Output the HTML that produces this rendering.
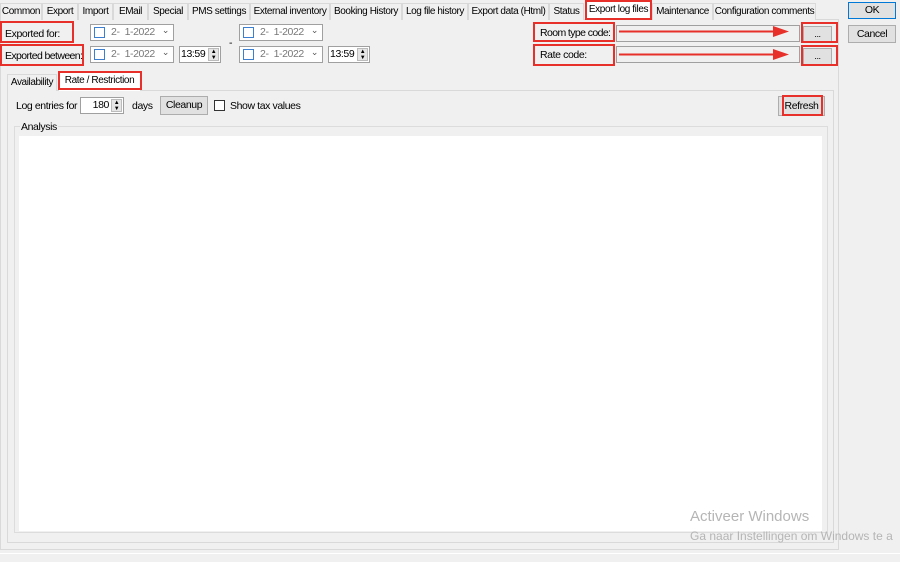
<!DOCTYPE html>
<html><head><style>
*{box-sizing:border-box;margin:0;padding:0}
body{width:900px;height:562px;background:#f0f0f0;font-family:"Liberation Sans",sans-serif;font-size:10.5px;color:#000;position:relative;overflow:hidden;letter-spacing:-0.4px;white-space:nowrap}
.a{position:absolute}
.tab{position:absolute;top:3px;height:17px;border:1px solid #d9d9d9;border-bottom:none;background:#f0f0f0;line-height:15px;text-align:center;font-size:10px;overflow:hidden}
.red{position:absolute;border:2px solid #e8302a}
.dp{position:absolute;height:17px;background:#fff;border:1px solid #a0a0a0;color:#777}
.dp .cb{position:absolute;left:3px;top:2px;width:11px;height:11px;border:1px solid #3c7fd0}
.dp .t{position:absolute;left:20px;top:1px}
.dp .v{position:absolute;right:4px;top:0px;font-size:9px;color:#555}
.tm{position:absolute;height:17px;background:#fff;border:1px solid #a0a0a0;padding-left:1px;line-height:15px}
.sp{position:absolute;right:1px;top:1px;width:11px;height:13px;background:#e5e5e5;border:1px solid #bbb;font-size:6px;line-height:6px;text-align:center}
.btn{position:absolute;background:#e1e1e1;border:1px solid #adadad;text-align:center}
</style></head><body>
<div class="a" style="left:0;top:19px;width:839px;height:531px;border:1px solid #d9d9d9;background:#f0f0f0"></div>
<div class="tab" style="left:0;width:42px">Common</div>
<div class="tab" style="left:42px;width:36px">Export</div>
<div class="tab" style="left:78px;width:35px">Import</div>
<div class="tab" style="left:113px;width:35px">EMail</div>
<div class="tab" style="left:148px;width:40px">Special</div>
<div class="tab" style="left:188px;width:62px">PMS settings</div>
<div class="tab" style="left:250px;width:80px">External inventory</div>
<div class="tab" style="left:330px;width:72px">Booking History</div>
<div class="tab" style="left:402px;width:66px">Log file history</div>
<div class="tab" style="left:468px;width:81px">Export data (Html)</div>
<div class="tab" style="left:549px;width:35px">Status</div>
<div class="tab" style="left:585px;top:1px;height:19px;width:67px;background:#fff">Export log files</div>
<div class="tab" style="left:652px;width:61px">Maintenance</div>
<div class="tab" style="left:713px;width:103px">Configuration comments</div>
<div class="red" style="left:585px;top:0;width:67px;height:20px"></div>

<div class="a" style="left:5px;top:28px">Exported for:</div>
<div class="red" style="left:0;top:21px;width:74px;height:22px"></div>
<div class="a" style="left:5px;top:50px;letter-spacing:-0.6px">Exported between:</div>
<div class="red" style="left:0;top:44px;width:84px;height:22px"></div>

<div class="dp" style="left:90px;top:24px;width:84px"><div class="cb"></div><div class="t">2-&nbsp; 1-2022</div><div class="v">&#8964;</div></div>
<div class="dp" style="left:239px;top:24px;width:84px"><div class="cb"></div><div class="t">2-&nbsp; 1-2022</div><div class="v">&#8964;</div></div>
<div class="dp" style="left:90px;top:46px;width:84px"><div class="cb"></div><div class="t">2-&nbsp; 1-2022</div><div class="v">&#8964;</div></div>
<div class="dp" style="left:239px;top:46px;width:84px"><div class="cb"></div><div class="t">2-&nbsp; 1-2022</div><div class="v">&#8964;</div></div>
<div class="a" style="left:229px;top:37px">-</div>
<div class="tm" style="left:179px;top:46px;width:42px">13:59<div class="sp">▲<br>▼</div></div>
<div class="tm" style="left:328px;top:46px;width:42px">13:59<div class="sp">▲<br>▼</div></div>

<div class="a" style="left:540px;top:27px;letter-spacing:-0.6px">Room type code:</div>
<div class="red" style="left:533px;top:22px;width:82px;height:20px"></div>
<div class="a" style="left:540px;top:49px">Rate code:</div>
<div class="red" style="left:533px;top:44px;width:82px;height:22px"></div>
<div class="a" style="left:616px;top:25px;width:184px;height:17px;border:1px solid #a0a0a0;background:#f0f0f0"></div>
<div class="a" style="left:616px;top:46px;width:184px;height:17px;border:1px solid #a0a0a0;background:#f0f0f0"></div>
<svg class="a" style="left:615px;top:24px" width="180" height="40"><g fill="#e8302a" stroke="#e8302a"><line x1="4" y1="7.5" x2="160" y2="7.5" stroke-width="2"/><polygon points="158,2 174,7.5 158,13" stroke="none"/><line x1="4" y1="30.5" x2="160" y2="30.5" stroke-width="2"/><polygon points="158,25 174,30.5 158,36" stroke="none"/></g></svg>
<div class="btn" style="left:803px;top:26px;width:29px;height:17px;font-size:9px;line-height:14px">...</div>
<div class="btn" style="left:803px;top:48px;width:29px;height:17px;font-size:9px;line-height:14px">...</div>
<div class="red" style="left:801px;top:22px;width:37px;height:21px"></div>
<div class="red" style="left:801px;top:45px;width:37px;height:21px"></div>

<div class="btn" style="left:848px;top:2px;width:48px;height:17px;border:1px solid #0078d7;line-height:15px">OK</div>
<div class="btn" style="left:848px;top:25px;width:48px;height:18px;line-height:16px">Cancel</div>

<div class="a" style="left:7px;top:90px;width:827px;height:453px;border:1px solid #d9d9d9;background:#f0f0f0"></div>
<div class="tab" style="left:7px;top:74px;height:17px;width:50px">Availability</div>
<div class="tab" style="left:58px;top:72px;height:19px;width:83px;background:#fff;border-bottom:none">Rate / Restriction</div>
<div class="red" style="left:58px;top:71px;width:84px;height:19px"></div>

<div class="a" style="left:16px;top:100px">Log entries for</div>
<div class="tm" style="left:80px;top:97px;width:44px;text-align:right;padding-right:14px">180<div class="sp">▲<br>▼</div></div>
<div class="a" style="left:132px;top:100px">days</div>
<div class="btn" style="left:160px;top:96px;width:48px;height:19px;line-height:17px">Cleanup</div>
<div class="a" style="left:214px;top:100px;width:11px;height:11px;border:1px solid #333;background:#fff"></div>
<div class="a" style="left:230px;top:100px">Show tax values</div>
<div class="btn" style="left:778px;top:96px;width:47px;height:20px;line-height:18px">Refresh</div>
<div class="red" style="left:782px;top:95px;width:41px;height:21px"></div>

<div class="a" style="left:14px;top:126px;width:814px;height:407px;border:1px solid #dcdcdc"></div>
<div class="a" style="left:20px;top:121px;background:#f0f0f0;padding:0 1px">Analysis</div>
<div class="a" style="left:19px;top:136px;width:803px;height:395px;background:#fff"></div>

<div class="a" style="left:0;top:553px;width:900px;height:1px;background:#fff"></div>
<div class="a" style="left:690px;top:508px;font-size:15px;color:#b5b5b5;letter-spacing:0">Activeer Windows</div>
<div class="a" style="left:690px;top:529px;font-size:12px;color:#b5b5b5;letter-spacing:0">Ga naar Instellingen om Windows te a</div>
</body></html>
